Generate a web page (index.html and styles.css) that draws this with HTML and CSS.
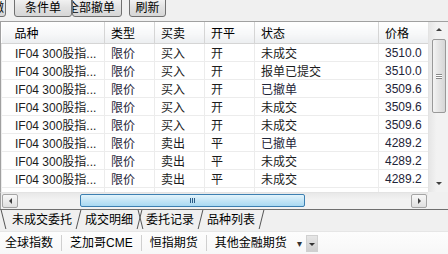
FILE: index.html
```html
<!DOCTYPE html>
<html lang="zh-CN">
<head>
    <meta charset="UTF-8">
    <title>委托记录</title>
    <link rel="stylesheet" href="styles.css">
</head>
<body>
    <div class="window">
        <div class="toolbar">
            <button class="btn btn-cut">撤</button>
            <button class="btn btn-cond">条件单</button>
            <button class="btn btn-all">全部撤单</button>
            <button class="btn btn-refresh">刷新</button>
        </div>

        <div class="view">
            <div class="table-area">
                <table class="orders">
                    <colgroup>
                        <col style="width: 103px">
                        <col style="width: 50px">
                        <col style="width: 50px">
                        <col style="width: 50px">
                        <col style="width: 124px">
                        <col style="width: 51px">
                    </colgroup>
                    <thead>
                        <tr>
                            <th class="first">品种</th>
                            <th>类型</th>
                            <th>买卖</th>
                            <th>开平</th>
                            <th>状态</th>
                            <th>价格</th>
                        </tr>
                    </thead>
                    <tbody>
                        <tr><td class="first">IF04 300股指...</td><td class="type">限价</td><td>买入</td><td>开</td><td>未成交</td><td class="price">3510.0</td></tr>
                        <tr><td class="first">IF04 300股指...</td><td class="type">限价</td><td>买入</td><td>开</td><td>报单已提交</td><td class="price">3510.0</td></tr>
                        <tr><td class="first">IF04 300股指...</td><td class="type">限价</td><td>买入</td><td>开</td><td class="type">已撤单</td><td class="price">3509.6</td></tr>
                        <tr><td class="first">IF04 300股指...</td><td class="type">限价</td><td>买入</td><td>开</td><td>未成交</td><td class="price">3509.6</td></tr>
                        <tr><td class="first">IF04 300股指...</td><td class="type">限价</td><td>买入</td><td>开</td><td>未成交</td><td class="price">3509.6</td></tr>
                        <tr><td class="first">IF04 300股指...</td><td class="type">限价</td><td>卖出</td><td>平</td><td class="type">已撤单</td><td class="price">4289.2</td></tr>
                        <tr><td class="first">IF04 300股指...</td><td class="type">限价</td><td>卖出</td><td>平</td><td>未成交</td><td class="price">4289.2</td></tr>
                        <tr><td class="first">IF04 300股指...</td><td class="type">限价</td><td>卖出</td><td>平</td><td>未成交</td><td class="price">4289.2</td></tr>
                        <tr><td class="first"></td><td></td><td></td><td></td><td></td><td></td></tr>
                    </tbody>
                </table>
            </div>

            <div class="vscroll">
                <div class="arrow up"></div>
                <div class="vtrack">
                    <div class="vthumb"><span class="grip-h"></span></div>
                </div>
                <div class="arrow down"></div>
            </div>

            <div class="hscroll">
                <div class="hbtn"><span class="arrow left"></span></div>
                <div class="htrack">
                    <div class="hthumb"><span class="grip-v"></span></div>
                </div>
                <div class="hbtn"><span class="arrow right"></span></div>
            </div>
            <div class="corner"></div>
        </div>

        <div class="tabs">
            <div class="tab">未成交委托</div>
            <div class="tab">成交明细</div>
            <div class="tab">委托记录</div>
            <div class="tab">品种列表</div>
        </div>

        <div class="markets">
            <span class="market">全球指数</span>
            <span class="market">芝加哥CME</span>
            <span class="market">恒指期货</span>
            <span class="market last">其他金融期货</span>
            <span class="drop">▾</span>
            <span class="more"></span>
        </div>
    </div>
</body>
</html>
```

FILE: styles.css
```css
body {
    margin: 0;
    background: #f0f0f0;
    font-family: "Liberation Sans", "Noto Sans CJK SC", sans-serif;
    font-size: 12px;
    color: #1c1c1c;
}

.window {
    width: 448px;
    height: 254px;
    overflow: hidden;
    display: flex;
    flex-direction: column;
}

/* top buttons */
.toolbar {
    height: 21px;
    display: flex;
    align-items: flex-start;
    overflow: hidden;
}

.btn {
    height: 20px;
    margin-top: -3px;
    padding: 2px 0 0;
    border: 1px solid #707070;
    border-radius: 3px;
    background: linear-gradient(#f6f6f6, #e2e2e2 50%, #d6d6d6);
    font-family: inherit;
    font-size: 12px;
    color: #000;
    overflow: hidden;
    white-space: nowrap;
    line-height: 14px;
}

.btn-cut {
    width: 20px;
    margin-left: -14px;
    text-align: right;
    padding-right: 1px;
}

.btn-cond {
    width: 58px;
    margin-left: 8px;
}

.btn-all {
    width: 50px;
    margin-left: 0;
    text-align: left;
    text-indent: -6px;
    padding-left: 0;
}

.btn-refresh {
    width: 37px;
    margin-left: 7px;
}

/* grid with scrollbars */
.view {
    display: grid;
    grid-template-columns: 428px 20px;
    grid-template-rows: 170px 17px;
    border-top: 1px solid #a0a0a0;
}

.table-area {
    overflow: hidden;
    background: #fff;
    border-left: 1px solid #a0a0a0;
}

.orders {
    table-layout: fixed;
    border-collapse: collapse;
    width: 428px;
}

.orders th {
    height: 21px;
    padding: 0 0 0 6px;
    text-align: left;
    font-weight: normal;
    color: #000;
    background: linear-gradient(#ffffff, #f6f7f8 60%, #eceef0);
    border-right: 1px solid #d5d5d5;
    border-bottom: 1px solid #d5d5d5;
}

.orders td {
    height: 17px;
    padding: 0 0 0 6px;
    white-space: nowrap;
    overflow: hidden;
    border-right: 1px solid #ececec;
    border-bottom: 1px solid #ececec;
}

.orders .first {
    padding-left: 13px;
}

.orders td.first {
    border-left: 1px solid #ececec;
}

.orders .type,
.orders .price {
    color: #1e2438;
}

/* vertical scrollbar */
.vscroll {
    display: flex;
    flex-direction: column;
    align-items: center;
    background: linear-gradient(90deg, #e6e6e6, #f2f2f2 40%, #f2f2f2);
    border-left: 1px solid #e3e3e3;
}

.vtrack {
    flex: 1;
    width: 100%;
    display: flex;
    justify-content: center;
}

.vthumb {
    width: 12px;
    height: 72px;
    margin-top: 3px;
    border: 1px solid #999;
    border-radius: 2px;
    background: linear-gradient(90deg, #f4f4f4, #e4e4e4 50%, #d6d6d6);
    display: flex;
    align-items: center;
    justify-content: center;
}

.grip-h {
    width: 6px;
    height: 5px;
    border-top: 1px solid #888;
    border-bottom: 1px solid #888;
    box-sizing: border-box;
    background: linear-gradient(#fff 0 1px, #888 1px 2px, #fff 2px);
}

.arrow {
    width: 0;
    height: 0;
    border: 3px solid transparent;
}

.arrow.up {
    margin: 6px 0 5px;
    border-bottom: 3px solid #404040;
    border-top-width: 0;
}

.arrow.down {
    margin: 5px 0 7px;
    border-top: 3px solid #404040;
    border-bottom-width: 0;
}

/* horizontal scrollbar */
.hscroll {
    display: flex;
    align-items: center;
    background: linear-gradient(#e8e8e8, #f2f2f2 40%, #f2f2f2);
    border-left: 1px solid #a0a0a0;
    border-top: 1px solid #e3e3e3;
}

.hbtn {
    width: 16px;
    height: 14px;
    margin: 0 1px;
    box-sizing: border-box;
    border: 1px solid #a5a5a5;
    border-radius: 2px;
    background: linear-gradient(#f8f8f8, #e0e0e0);
    display: flex;
    align-items: center;
    justify-content: center;
}

.arrow.left {
    border-right: 3px solid #404040;
    border-left-width: 0;
}

.arrow.right {
    border-left: 3px solid #404040;
    border-right-width: 0;
}

.htrack {
    flex: 1;
    height: 100%;
}

.hthumb {
    width: 225px;
    height: 13px;
    margin: 1px 0 0 61px;
    box-sizing: border-box;
    border: 1px solid #3c7fb1;
    border-radius: 2px;
    background: linear-gradient(#e3f4fc, #c4e5f6 50%, #a9d9f2);
    display: flex;
    align-items: center;
    justify-content: center;
}

.grip-v {
    width: 5px;
    height: 5px;
    border-left: 1px solid #2a5b86;
    border-right: 1px solid #2a5b86;
    box-sizing: border-box;
    background: linear-gradient(90deg, transparent 1px, #2a5b86 1px 2px, transparent 2px);
}

.corner {
    background: #f0f0f0;
}

/* sheet tabs */
.tabs {
    height: 21px;
    display: flex;
    border-top: 1px solid #6f6f6f;
    background: #f0f0f0;
}

.tab {
    position: relative;
    height: 21px;
    line-height: 20px;
    padding: 0 8px 0 9px;
    margin-right: -4px;
    color: #000;
}

.tab:first-child {
    padding-left: 12px;
}

.tab::before,
.tab::after {
    content: "";
    position: absolute;
    top: 0;
    width: 1px;
    height: 19px;
    background: #555;
}

.tab::before {
    left: 3px;
    transform: skewX(14deg);
}

.tab:nth-child(even)::before {
    display: none;
}

.tab::after {
    right: 1px;
    transform: skewX(-14deg);
}

/* market strip */
.markets {
    flex: 1;
    display: flex;
    align-items: center;
    background: linear-gradient(#fdfdfd, #f7f7f7);
    border-top: 1px solid #e6e6e6;
}

.market {
    padding: 0 8px;
    border-right: 1px solid #cfcfcf;
    line-height: 16px;
    color: #000;
}

.market:first-child {
    padding-left: 5px;
}

.market.last {
    border-right: none;
}

.drop {
    margin-left: 2px;
    font-size: 10px;
    color: #333;
}

.more {
    width: 10px;
    height: 15px;
    margin-left: 4px;
    background: linear-gradient(#e6e6e6, #cfcfcf);
    border: 1px solid #d0d0d0;
    position: relative;
}

.more::after {
    content: "";
    position: absolute;
    left: 2px;
    top: 7px;
    border: 3px solid transparent;
    border-top: 3px solid #333;
    border-bottom-width: 0;
    box-shadow: 0 -3px 0 -2px #333;
}
```
